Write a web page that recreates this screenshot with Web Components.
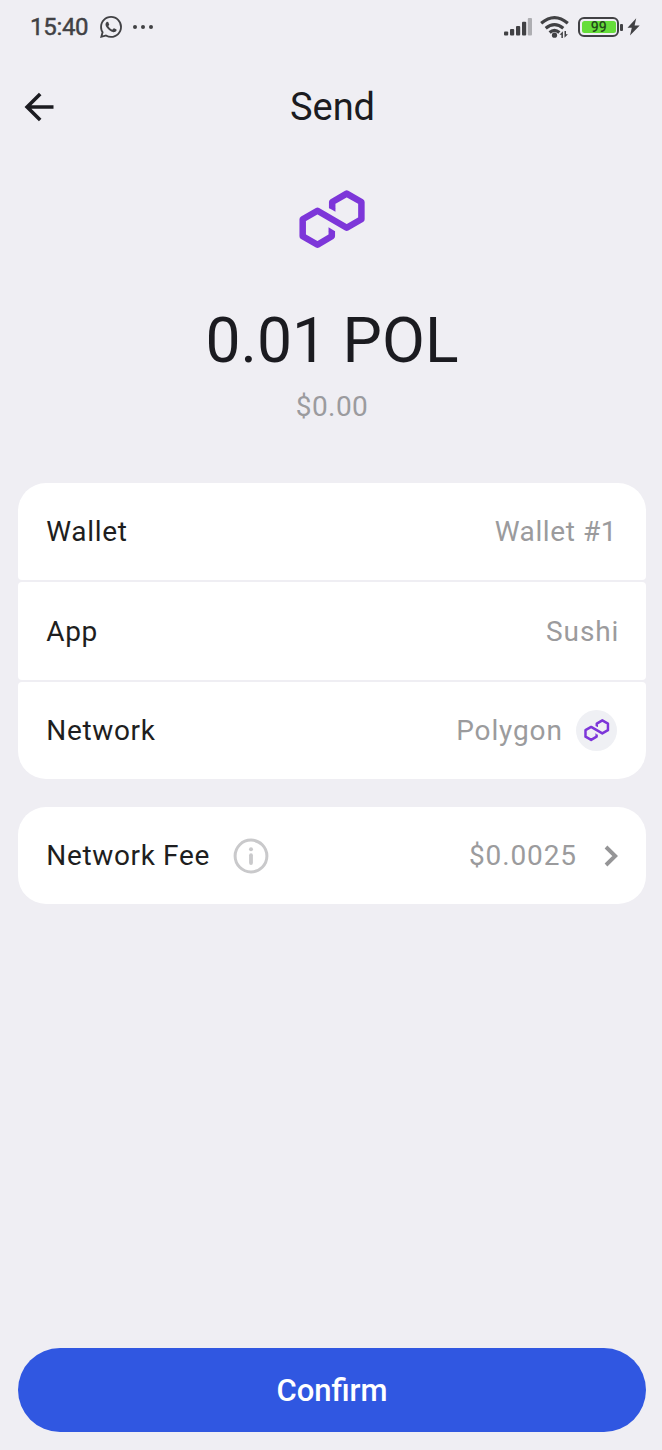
<!DOCTYPE html>
<html lang="en">
<head>
<meta charset="utf-8">
<title>Send</title>
<style>
  html, body { margin: 0; height: 100%; background: #efeef3; }
  body { font-family: Roboto, "Noto Sans", sans-serif; color: #1b1b20; }
</style>
</head>
<body>
<send-screen>
  <status-bar slot="status" time="15:40" level="99"></status-bar>
  <top-bar slot="header">Send</top-bar>
  <amount-hero slot="hero"><span slot="amount">0.01 POL</span><span slot="fiat">$0.00</span></amount-hero>
  <row-group>
    <info-row label="Wallet" style="--value-spacing:.6px; --value-end:3px; --text-drop:0px">Wallet #1</info-row>
    <info-row label="App" style="--value-end:1px">Sushi</info-row>
    <info-row label="Network">Polygon<token-badge slot="end"></token-badge></info-row>
  </row-group>
  <row-group>
    <info-row label="Network Fee"><info-icon slot="hint"></info-icon>$0.0025<chevron-icon slot="end"></chevron-icon></info-row>
  </row-group>
  <pill-button slot="footer">Confirm</pill-button>
</send-screen>
<script>
  const define = (name, html, setup) => {
    const template = document.createElement('template');
    template.innerHTML = html;
    customElements.define(name, class extends HTMLElement {
      constructor() {
        super();
        this.attachShadow({ mode: 'open' }).appendChild(template.content.cloneNode(true));
      }
      connectedCallback() { if (setup) setup(this, this.shadowRoot); }
    });
  };

  define('polygon-logo', `
    <style>
      :host { display: block; width: 66px; height: 58px; }
      svg { display: block; width: 100%; height: 100%; overflow: visible; }
    </style>
    <svg viewBox="0 0 66 58">
      <path d="M33.200 18.200V12l14.500-8.400L62.400 12v17.200L47.700 37.700 18.500 20.700 3.700 29.200v17L18.500 54.700 32.800 46.200V41" fill="none" stroke="#7d36d9" stroke-width="6.500" stroke-linejoin="round"/>
      <path d="M29.950 18h6.500v3.700zM29.550 41.200h6.500L29.550 37.300z" fill="#7d36d9"/>
    </svg>`);

  define('token-badge', `
    <style>
      :host { display: flex; width: 41.4px; height: 41.4px; border-radius: 50%; background: #eff0f4; align-items: center; justify-content: center; margin: 0 3px 0 13px; }
      polygon-logo { width: 25.4px; height: 22.2px; }
    </style>
    <polygon-logo></polygon-logo>`);

  define('info-icon', `
    <style>
      :host { display: block; width: 36px; height: 36px; margin: 1px 0 0 23.200px; }
      svg { display: block; }
    </style>
    <svg width="36" height="36" viewBox="0 0 36 36">
      <circle cx="18" cy="18" r="15.900" fill="none" stroke="#c9c9cb" stroke-width="3"/>
      <circle cx="18" cy="11.200" r="2" fill="#c9c9cb"/>
      <path d="M18 17.200v7.800" stroke="#c9c9cb" stroke-width="3.800" stroke-linecap="round"/>
    </svg>`);

  define('chevron-icon', `
    <style>
      :host { display: block; width: 14px; height: 22px; margin: 1px 1.800px 0 27.500px; }
      svg { display: block; }
    </style>
    <svg width="14" height="22" viewBox="0 0 14 22">
      <path d="M2 2L11.200 11 2 20" fill="none" stroke="#959597" stroke-width="3.900"/>
    </svg>`);

  define('status-bar', `
    <style>
      :host { display: flex; height: 54px; align-items: center; padding: 0 22.500px 0 30px; color: #414144; box-sizing: border-box; }
      svg { display: block; flex: none; }
      .time { font: 400 24px/28px Roboto, sans-serif; letter-spacing: -0.3px; -webkit-text-stroke: .45px #414144; }
      .chat { margin-left: 12px; }
      .more { margin-left: 10px; }
      .grow { flex: 1; }
      .wifi { margin-left: 8px; }
      .battery { margin-left: 8px; display: flex; align-items: center; }
      .shell { box-sizing: border-box; width: 41px; height: 20px; border: 2.200px solid #414144; border-radius: 6px; padding: 1.600px; display: flex; }
      .fill { flex: 1; background: #66dd3a; border-radius: 2.500px; font: 500 14px/13px Roboto, sans-serif; text-align: center; color: #24491a; }
      .nub { width: 2.300px; height: 7px; border-radius: 1px; background: #414144; margin-left: 1px; }
      .bolt { margin-left: 4px; }
    </style>
    <span class="time"></span>
    <svg class="chat" width="22" height="22" viewBox="0 0 24 24" fill="#414144">
      <path d="M17.472 14.382c-.297-.149-1.758-.867-2.03-.967-.273-.099-.471-.148-.67.15-.197.297-.767.966-.94 1.164-.173.199-.347.223-.644.075-.297-.15-1.255-.463-2.39-1.475-.883-.788-1.48-1.761-1.653-2.059-.173-.297-.018-.458.13-.606.134-.133.298-.347.446-.52.149-.174.198-.298.298-.497.099-.198.05-.371-.025-.52-.075-.149-.669-1.612-.916-2.207-.242-.579-.487-.5-.669-.51-.173-.008-.371-.01-.57-.01-.198 0-.52.074-.792.372-.272.297-1.04 1.016-1.04 2.479 0 1.462 1.065 2.875 1.213 3.074.149.198 2.096 3.2 5.077 4.487.709.306 1.262.489 1.694.625.712.227 1.36.195 1.871.118.571-.085 1.758-.719 2.006-1.413.248-.694.248-1.289.173-1.413-.074-.124-.272-.198-.57-.347m-5.421 7.403h-.004a9.87 9.87 0 01-5.031-1.378l-.361-.214-3.741.982.998-3.648-.235-.374a9.86 9.86 0 01-1.51-5.26c.001-5.45 4.436-9.884 9.888-9.884 2.64 0 5.122 1.03 6.988 2.898a9.825 9.825 0 012.893 6.994c-.003 5.45-4.437 9.884-9.885 9.884m8.413-18.297A11.815 11.815 0 0012.05 0C5.495 0 .16 5.335.157 11.892c0 2.096.547 4.142 1.588 5.945L.057 24l6.305-1.654a11.882 11.882 0 005.683 1.448h.005c6.554 0 11.89-5.335 11.893-11.893a11.821 11.821 0 00-3.48-8.413z"/>
    </svg>
    <svg class="more" width="22" height="6" viewBox="0 0 22 6" fill="#414144"><circle cx="3" cy="3" r="2"/><circle cx="11" cy="3" r="2"/><circle cx="19" cy="3" r="2"/></svg>
    <span class="grow"></span>
    <svg width="28" height="20" viewBox="0 0 28 20" fill="#414144">
      <rect x="0" y="14.500" width="4.200" height="4" rx="1"/><rect x="6" y="12" width="4.200" height="6.500" rx="1"/><rect x="12" y="9" width="4.200" height="9.500" rx="1"/><rect x="18" y="4.800" width="4.200" height="13.700" rx="1"/><rect x="23.800" y="1" width="4.200" height="17.500" rx="1" fill="#aeaeb2"/>
    </svg>
    <svg class="wifi" width="30" height="24" viewBox="0 0 30 24">
      <g fill="none" stroke="#414144" stroke-width="3.200">
        <path d="M1.200 8.300Q14.500-3 27.800 8.300"/><path d="M5.700 13.200Q14.500 6 23.300 13.200"/><path d="M9.600 17.500Q14.500 13.300 19.400 17.500"/>
      </g>
      <circle cx="14.500" cy="20.200" r="2.600" fill="#414144"/>
      <g fill="#414144"><path d="M22.900 16.200v6.800h-1.500v-3.200h-1.900zM24.500 22.800V16h1.500v3.200h1.900z"/></g>
    </svg>
    <div class="battery"><div class="shell"><div class="fill"></div></div><div class="nub"></div></div>
    <svg class="bolt" width="13" height="18" viewBox="0 0 13 18"><path d="M9.200.3L.5 9.700h4.300L3 17.500l9.700-9.900H7.600z" fill="#414144"/></svg>`,
    (host, root) => {
      root.querySelector('.time').textContent = host.getAttribute('time');
      root.querySelector('.fill').textContent = host.getAttribute('level');
    });

  define('top-bar', `
    <style>
      :host { display: grid; grid-template-columns: 60px 1fr 60px; align-items: center; height: 106px; padding: 0 0 0 4px; margin-right: 1px; box-sizing: border-box; }
      svg { display: block; margin-left: 20px; }
      h1 { margin: 0; font: 400 38px/46px Roboto, sans-serif; text-align: center; }
    </style>
    <svg width="32" height="30" viewBox="0 0 32 30"><path d="M29.500 15H4.500M16.200 1.900L3.100 15l13.100 13.100" fill="none" stroke="#1b1b20" stroke-width="3.600"/></svg>
    <h1><slot></slot></h1>`);

  define('amount-hero', `
    <style>
      :host { display: flex; flex-direction: column; align-items: center; padding: 29.500px 0 0 2px; height: 323px; box-sizing: border-box; }
      .amount { font-size: 62.400px; line-height: 74px; margin-top: 56.500px; }
      .fiat { font-size: 28px; line-height: 34px; margin-top: 11.500px; letter-spacing: .4px; color: #9b9b9e; }
    </style>
    <polygon-logo></polygon-logo>
    <div class="amount"><slot name="amount"></slot></div>
    <div class="fiat"><slot name="fiat"></slot></div>`);

  define('row-group', `
    <style>
      :host { display: flex; flex-direction: column; gap: 2px; border-radius: 28px; overflow: hidden; }
    </style>
    <slot></slot>`);

  define('info-row', `
    <style>
      :host { display: flex; align-items: center; height: 97.330px; box-sizing: border-box; padding: 0 25.500px 0 28px; border-radius: 4px; background: #fff; font-size: 28px; line-height: 34px; letter-spacing: .875px; }
      .label, .value { padding-top: var(--text-drop, 1.500px); }
      .label { color: #1e1e20; letter-spacing: .65px; }
      .value { margin-left: auto; padding-right: var(--value-end, 0px); letter-spacing: var(--value-spacing, .875px); color: #9b9b9d; }
    </style>
    <span class="label"></span><slot name="hint"></slot>
    <span class="value"><slot></slot></span><slot name="end"></slot>`,
    (host, root) => { root.querySelector('.label').textContent = host.getAttribute('label'); });

  define('pill-button', `
    <style>
      :host { display: block; }
      button { display: block; width: 100%; height: 83.400px; border: 0; border-radius: 42px; padding: 1.500px 0 0; background: #3057e1; color: #fff; font: 500 31px/36px Roboto, sans-serif; }
    </style>
    <button type="button"><slot></slot></button>`);

  define('send-screen', `
    <style>
      :host { display: flex; flex-direction: column; height: 1450px; width: 662px; box-sizing: border-box; padding-bottom: 18.300px; background: #efeef3; }
      .list { display: flex; flex-direction: column; gap: 27.700px; padding: 0 16.300px 0 18.300px; }
      .footer { margin-top: auto; padding: 0 16.300px 0 18.300px; }
    </style>
    <slot name="status"></slot>
    <slot name="header"></slot>
    <slot name="hero"></slot>
    <div class="list"><slot></slot></div>
    <div class="footer"><slot name="footer"></slot></div>`);
</script>
</body>
</html>
